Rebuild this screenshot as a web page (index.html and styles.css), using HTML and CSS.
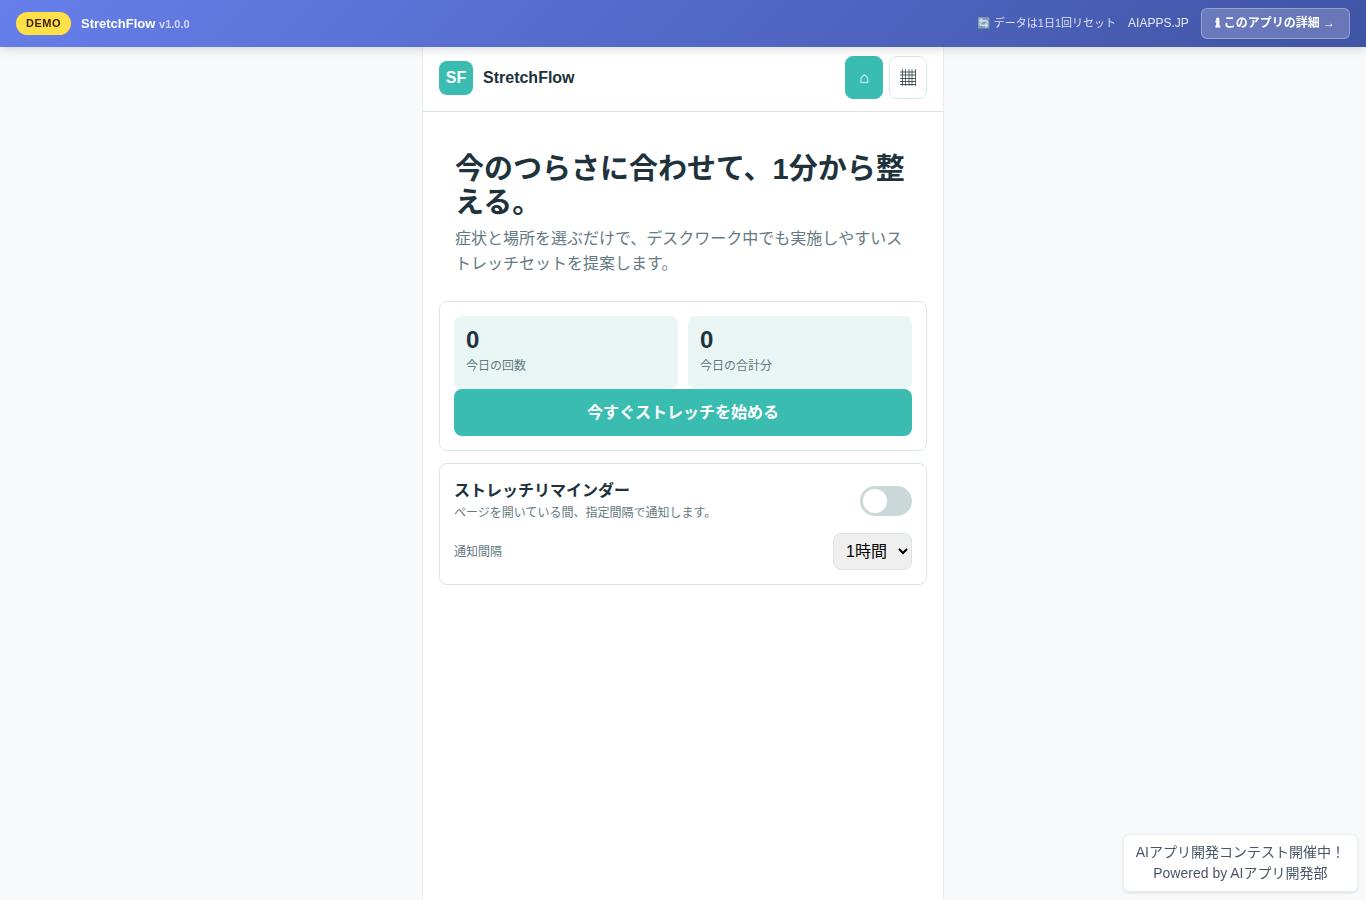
FILE: index.html
```html
<!DOCTYPE html>
<html lang="ja">
<head>
    <meta charset="UTF-8">
    <meta name="viewport" content="width=device-width, initial-scale=1.0">
    <title>StretchFlow</title>
    <link rel="stylesheet" href="styles.css">
</head>
<body>
    <div class="demo-bar">
        <div class="demo-left">
            <span class="demo-badge">DEMO</span>
            <span class="demo-title">StretchFlow <span class="demo-version">v1.0.0</span></span>
        </div>
        <div class="demo-right">
            <span class="demo-reset">🔄 データは1日1回リセット</span>
            <a class="demo-link" href="#">AIAPPS.JP</a>
            <a class="demo-detail" href="#"><span class="symbol">ℹ</span> このアプリの詳細 →</a>
        </div>
    </div>

    <div class="app">
        <header class="app-header">
            <div class="brand">
                <span class="brand-mark">SF</span>
                <span>StretchFlow</span>
            </div>
            <nav class="nav">
                <button type="button" class="nav-button active" aria-label="ホーム">⌂</button>
                <button type="button" class="nav-button" aria-label="カレンダー">
                    <svg class="grid-icon" viewBox="0 0 16 17" width="16" height="17" fill="none" stroke="currentColor">
                        <path opacity="0.7" d="M2.5 0V17M5.5 0V17M9 0V17M12 0V17M15.5 0V17"/>
                        <path opacity="0.8" d="M0 3H16M0 6H16M0 9.5H16M0 12.5H16M0 15.5H16"/>
                    </svg>
                </button>
            </nav>
        </header>

        <main class="main">
            <section class="hero">
                <h1>今のつらさに合わせて、1分から整える。</h1>
                <p>症状と場所を選ぶだけで、デスクワーク中でも実施しやすいストレッチセットを提案します。</p>
            </section>

            <section class="card">
                <div class="stats">
                    <div class="stat">
                        <strong>0</strong>
                        <span class="small">今日の回数</span>
                    </div>
                    <div class="stat">
                        <strong>0</strong>
                        <span class="small">今日の合計分</span>
                    </div>
                </div>
                <button type="button" class="start-button">今すぐストレッチを始める</button>
            </section>

            <section class="card">
                <div class="row">
                    <div>
                        <label class="row-title" for="reminder">ストレッチリマインダー</label>
                        <div class="small">ページを開いている間、指定間隔で通知します。</div>
                    </div>
                    <input class="switch" type="checkbox" id="reminder">
                </div>
                <div class="row interval-row">
                    <label class="small" for="interval">通知間隔</label>
                    <select id="interval" class="select">
                        <option>1時間</option>
                    </select>
                </div>
            </section>
        </main>
    </div>

    <a class="contest" href="#">AIアプリ開発コンテスト開催中！<br>Powered by AIアプリ開発部</a>
</body>
</html>
```

FILE: styles.css
```css
* {
    box-sizing: border-box;
}
body {
    margin: 0;
    padding-top: 44px;
    background: #f7f9fb;
    color: #20323b;
    font-family: "Liberation Sans", "Noto Sans CJK JP", sans-serif;
    font-size: 16px;
    line-height: 25px;
}
button, select {
    font: inherit;
}
a {
    text-decoration: none;
}
.symbol {
    font-family: "DejaVu Sans", sans-serif;
    -webkit-text-stroke: 1px currentColor;
}

/* demo bar */
.demo-bar {
    position: fixed;
    top: 0;
    left: 0;
    right: 0;
    z-index: 10;
    display: flex;
    align-items: center;
    justify-content: space-between;
    padding: 8px 16px;
    background: linear-gradient(135deg, #667eea 0%, #4054a4 100%);
    color: white;
    font-size: 13px;
    line-height: 15px;
    box-shadow: 0 2px 10px rgba(0, 0, 0, 0.15);
}
.demo-left, .demo-right {
    display: flex;
    align-items: center;
}
.demo-left {
    gap: 10px;
}
.demo-right {
    gap: 12px;
}
.demo-badge {
    padding: 4px 10px;
    border-radius: 12px;
    background: #ffe047;
    color: #422006;
    font-size: 11px;
    font-weight: bold;
    letter-spacing: 0.5px;
}
.demo-title {
    font-weight: bold;
}
.demo-version {
    font-size: 11px;
    opacity: 0.7;
}
.demo-reset {
    font-size: 11px;
    opacity: 0.8;
}
.demo-link {
    color: rgba(255, 255, 255, 0.85);
    font-size: 12px;
}
.demo-detail {
    padding: 7px 14px;
    border: 1px solid rgba(255, 255, 255, 0.3);
    border-radius: 6px;
    background: rgba(255, 255, 255, 0.2);
    color: white;
    font-size: 12px;
    font-weight: bold;
}

/* app */
.app {
    max-width: 520px;
    min-height: calc(100vh - 44px);
    margin: 0 auto;
    background: white;
    box-shadow: 0 0 0 1px #e9eef2;
}
.app-header {
    display: flex;
    align-items: center;
    justify-content: space-between;
    padding: 12px 16px;
    border-bottom: 1px solid #d9e6e6;
}
.brand {
    display: flex;
    align-items: center;
    gap: 10px;
    font-weight: bold;
}
.brand-mark {
    display: grid;
    place-items: center;
    width: 34px;
    height: 34px;
    border-radius: 8px;
    background: #3bbcb0;
    color: white;
}
.nav {
    display: flex;
    gap: 6px;
}
.nav-button {
    width: 38px;
    padding: 8px 0;
    border: 1px solid #d9e6e6;
    border-radius: 8px;
    background: white;
    color: #20323b;
}
.nav-button.active {
    border-color: #3bbcb0;
    background: #3bbcb0;
    color: white;
}
.grid-icon {
    display: block;
    margin: 0 auto;
}
.main {
    padding: 16px;
}
.hero {
    padding: 24px 16px 25px;
}
.hero h1 {
    margin: 0 0 6px;
    font-size: 29px;
    line-height: 34px;
}
.hero p {
    margin: 0;
    color: #647981;
}
.card {
    margin-bottom: 12px;
    padding: 14px;
    border: 1px solid #d9e6e6;
    border-radius: 8px;
}
.small {
    color: #647981;
    font-size: 12px;
    line-height: 20px;
}
.stats {
    display: grid;
    grid-template-columns: 1fr 1fr;
    gap: 10px;
}
.stat {
    padding: 12px;
    border-radius: 8px;
    background: #eaf6f6;
}
.stat strong {
    display: block;
    font-size: 24px;
    line-height: 24px;
}
.start-button {
    display: block;
    width: 100%;
    padding: 11px 14px;
    border: 0;
    border-radius: 8px;
    background: #3bbcb0;
    color: white;
    font-weight: bold;
}
.row {
    display: flex;
    align-items: center;
    justify-content: space-between;
}
.row-title {
    display: block;
    font-weight: bold;
}
.interval-row {
    margin-top: 10px;
}
.switch {
    appearance: none;
    width: 52px;
    height: 30px;
    margin: 0;
    padding: 3px;
    border-radius: 15px;
    background: #cbd8da;
}
.switch::before {
    content: "";
    display: block;
    width: 24px;
    height: 24px;
    border-radius: 50%;
    background: white;
}
.switch:checked {
    background: #3bbcb0;
}
.switch:checked::before {
    margin-left: auto;
}
.select {
    height: 37px;
    padding: 0 8px;
    border: 1px solid #d9e6e6;
    border-radius: 8px;
    background: #efefef;
    color: black;
}

/* contest notice */
.contest {
    position: fixed;
    right: 8px;
    bottom: 8px;
    padding: 7px 12px;
    border: 1px solid #e9eef2;
    border-radius: 6px;
    background: white;
    color: #4a5568;
    font-size: 14px;
    line-height: 21px;
    text-align: center;
    box-shadow: 0 1px 3px rgba(0, 0, 0, 0.1);
}
```
